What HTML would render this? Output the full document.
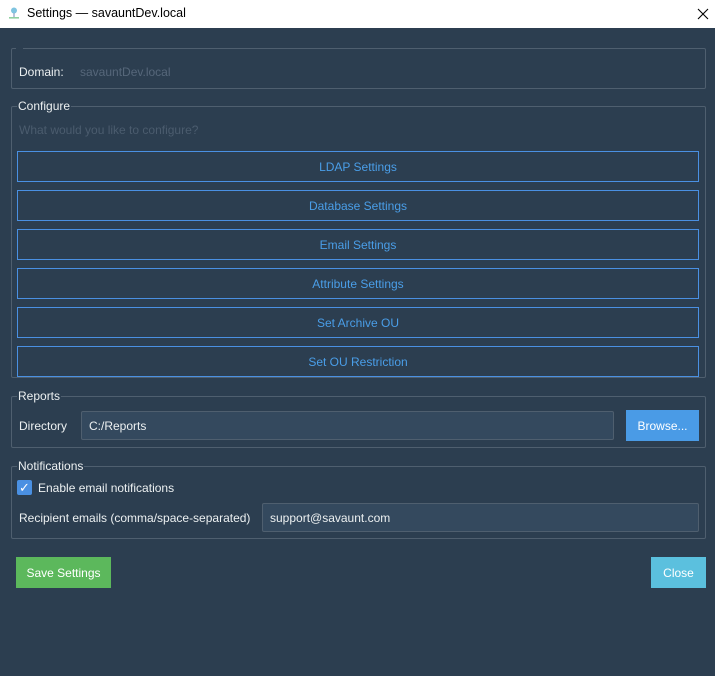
<!DOCTYPE html>
<html><head><meta charset="utf-8"><style>
*{box-sizing:border-box;margin:0;padding:0}
body{width:715px;height:676px;background:#2c3e50;font-family:"Liberation Sans",sans-serif;font-size:12px;color:#ecf0f1;position:relative;overflow:hidden}
.abs{position:absolute}
.title{left:0;top:0;width:715px;height:28px;background:#fff;color:#000;font-size:12.5px}
.frame{position:absolute;border:1px solid #4f5f6f;border-radius:2px}
.legend{position:absolute;background:#2c3e50;padding:0 1px;color:#ecf0f1;font-size:12px;line-height:14px}
.btn{position:absolute;left:17px;width:682px;height:31px;border:1px solid #4a90e2;color:#4a9ee8;text-align:center;line-height:31px;font-size:12px}
.input{position:absolute;background:#34495e;border:1px solid #4f5f6f;border-radius:2px;line-height:28px;padding-left:7px;font-size:12px;color:#ecf0f1}
</style></head><body>
<div class="abs title">
  <svg class="abs" style="left:8px;top:6px" width="12" height="14" viewBox="0 0 12 14"><circle cx="6" cy="4.5" r="3" fill="#7fc4e0"/><rect x="5.3" y="7" width="1.4" height="4" fill="#9ac"/><rect x="1" y="11" width="10" height="1.6" fill="#8fd0a0"/></svg>
  <span class="abs" style="left:27px;top:6px">Settings — savauntDev.local</span>
  <svg class="abs" style="left:697px;top:8px" width="12" height="12" viewBox="0 0 12 12"><path d="M1 1L11 11M11 1L1 11" stroke="#000" stroke-width="1.1"/></svg>
</div>

<div class="frame" style="left:11px;top:48px;width:695px;height:41px"></div>
<div class="legend" style="left:16px;top:42px;width:7px;height:8px"></div>
<span class="abs" style="left:19px;top:65px">Domain:</span>
<span class="abs" style="left:80px;top:65px;color:#56677a">savauntDev.local</span>

<div class="frame" style="left:11px;top:106px;width:695px;height:272px"></div>
<div class="legend" style="left:17px;top:99px">Configure</div>
<span class="abs" style="left:19px;top:123px;color:#4b5c6e">What would you like to configure?</span>
<div class="btn" style="top:151px">LDAP Settings</div>
<div class="btn" style="top:190px">Database Settings</div>
<div class="btn" style="top:229px">Email Settings</div>
<div class="btn" style="top:268px">Attribute Settings</div>
<div class="btn" style="top:307px">Set Archive OU</div>
<div class="btn" style="top:346px">Set OU Restriction</div>

<div class="frame" style="left:11px;top:396px;width:695px;height:52px"></div>
<div class="legend" style="left:17px;top:389px">Reports</div>
<span class="abs" style="left:19px;top:419px">Directory</span>
<div class="input" style="left:81px;top:411px;width:533px;height:29px">C:/Reports</div>
<div class="abs" style="left:626px;top:410px;width:73px;height:31px;background:#4a9be6;color:#fff;text-align:center;line-height:32px">Browse...</div>

<div class="frame" style="left:11px;top:466px;width:695px;height:73px"></div>
<div class="legend" style="left:17px;top:459px">Notifications</div>
<div class="abs" style="left:17px;top:480px;width:15px;height:15px;background:#4a90e2;border-radius:2px;color:#fff;font-size:13px;line-height:15px;text-align:center">✓</div>
<span class="abs" style="left:38px;top:481px">Enable email notifications</span>
<span class="abs" style="left:19px;top:511px">Recipient emails (comma/space-separated)</span>
<div class="input" style="left:262px;top:503px;width:437px;height:29px">support@savaunt.com</div>

<div class="abs" style="left:16px;top:557px;width:95px;height:31px;background:#5cb85c;color:#fff;text-align:center;line-height:32px">Save Settings</div>
<div class="abs" style="left:651px;top:557px;width:55px;height:31px;background:#5bc0de;color:#fff;text-align:center;line-height:32px">Close</div>
</body></html>
